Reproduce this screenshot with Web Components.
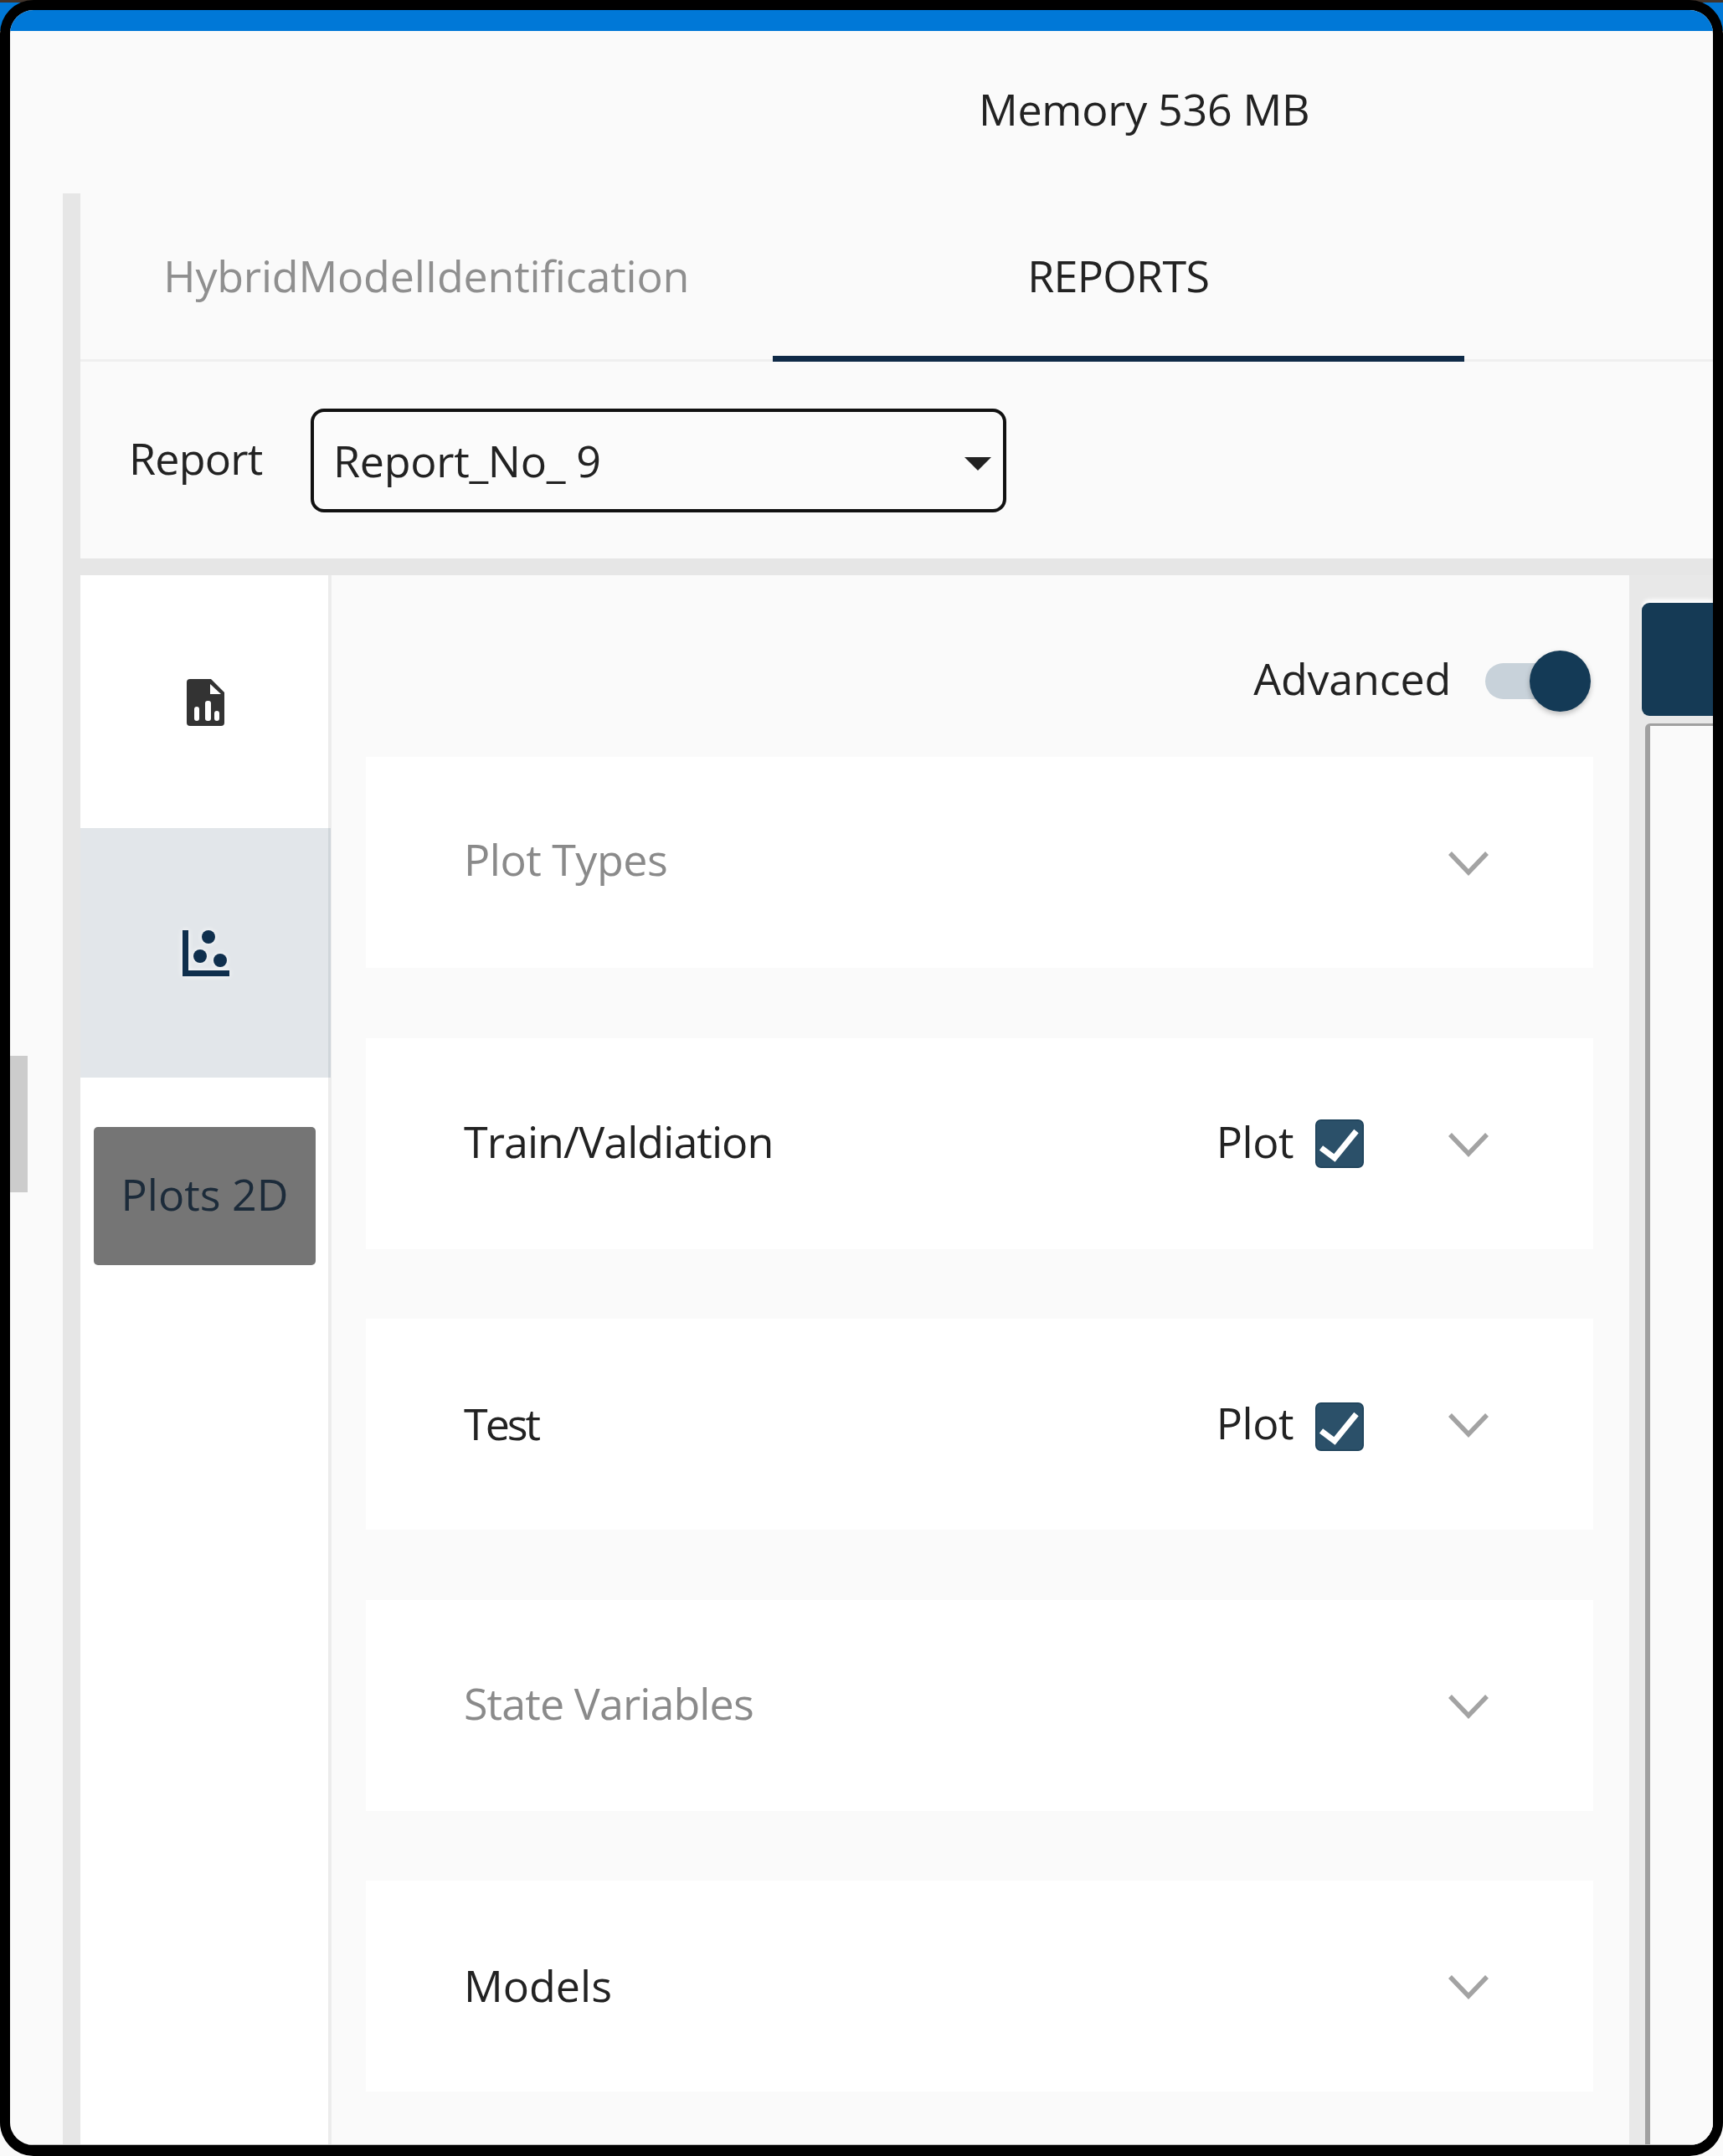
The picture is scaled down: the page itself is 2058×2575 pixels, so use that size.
<!DOCTYPE html>
<html>
<head>
<meta charset="utf-8">
<style>
  html, body { margin: 0; padding: 0; }
  body {
    font-family: "Open Sans", "Liberation Sans", sans-serif;
    background: linear-gradient(#40342c 3px, #0078d7 3px, #0078d7 37px, #fafafa 37px);
  }
</style>
</head>
<body>
<app-frame>
  <header-bar>Memory 536 MB</header-bar>
  <report-tabs first="HybridModelIdentification" second="REPORTS"></report-tabs>
  <report-bar label="Report" value="Report_No_ 9"></report-bar>
  <work-area>
    <side-rail></side-rail>
    <options-panel>
      <option-card label="Plot Types" muted style="--ls:-.5px; --dy:10px"></option-card>
      <option-card label="Train/Valdiation" plot style="--ls:-.95px; --dy:7px"></option-card>
      <option-card label="Test" plot style="--ls:-3px; --dy:3px; --boxdy:3px"></option-card>
      <option-card label="State Variables" muted style="--ls:-.9px; --dy:7px"></option-card>
      <option-card label="Models" style="--dy:3px"></option-card>
    </options-panel>
    <preview-pane></preview-pane>
  </work-area>
</app-frame>
<script>
  function def(name, html) {
    customElements.define(name, class extends HTMLElement {
      connectedCallback() {
        const root = this.attachShadow({mode: 'open'});
        root.innerHTML = typeof html === 'function' ? html(this) : html;
      }
    });
  }

  def('app-frame', `
    <style>
      :host {
        display: flex; flex-direction: column; position: relative;
        width: 2058px; height: 2575px; box-sizing: border-box;
        border: 12px solid #000; border-bottom-width: 13px; border-radius: 40px;
        background: #fafafa; overflow: hidden;
      }
      .title { flex: none; height: 25px; background: #0078d7; }
      .rest { flex: 1; min-height: 0; display: flex; flex-direction: column; }
      .handle { position: absolute; left: 0; top: 1249px; width: 21px; height: 163px; background: #cccccc; }
      .line { flex: none; height: 1px; background: #b5b5b5; }
    </style>
    <div class="title"></div>
    <div class="rest"><slot></slot></div>
    <div class="line"></div>
    <div class="handle"></div>
  `);

  def('header-bar', `
    <style>
      :host {
        display: flex; align-items: center; flex: none; box-sizing: border-box;
        height: 194px; padding: 0 0 10px 1157px;
        font-size: 52px; color: #222; letter-spacing: -.3px;
      }
    </style>
    <slot></slot>
  `);

  def('report-tabs', el => `
    <style>
      :host {
        display: flex; flex: none; box-sizing: border-box; height: 201px;
        margin-left: 63px; border-left: 21px solid #e6e6e6;
        font-size: 52px;
      }
      .wrap { flex: 1; display: flex; border-bottom: 3px solid #efefef; padding-right: 297px; }
      .tab {
        flex: 1; display: flex; align-items: center; justify-content: center;
        margin-bottom: -3px; border-bottom: 7px solid transparent;
      }
      .off { color: #8f8f8f; letter-spacing: -.2px; }
      .on { color: #222; border-bottom-color: #0f2a47; letter-spacing: -.7px; }
    </style>
    <div class="wrap">
      <div class="tab off">${el.getAttribute('first')}</div>
      <div class="tab on">${el.getAttribute('second')}</div>
    </div>
  `);

  def('report-bar', el => `
    <style>
      :host {
        display: flex; align-items: center; flex: none; box-sizing: border-box; height: 235px;
        margin-left: 63px; border-left: 21px solid #e6e6e6; padding-left: 58px;
        font-size: 52px; color: #222;
      }
      .label { width: 217px; padding-bottom: 6px; letter-spacing: -.8px; }
      .select {
        display: flex; align-items: center; justify-content: space-between; box-sizing: border-box;
        width: 831px; height: 124px; border: 4px solid #111; border-radius: 16px;
        padding: 0 14px 0 23px; background: #fbfbfb; letter-spacing: -.3px;
      }
      svg { width: 32px; height: 18px; margin-top: 8px; }
    </style>
    <div class="label">${el.getAttribute('label')}</div>
    <div class="select">
      <span>${el.getAttribute('value')}</span>
      <svg viewBox="0 0 32 18"><path d="M0 1H32L16 17Z" fill="#222"/></svg>
    </div>
  `);

  def('work-area', `
    <style>
      :host {
        display: flex; flex: 1; min-height: 0;
        margin-left: 63px; border-left: 21px solid #e6e6e6; border-top: 20px solid #e6e6e6;
      }
    </style>
    <slot></slot>
  `);

  def('side-rail', `
    <style>
      :host {
        display: flex; flex-direction: column; flex: none; box-sizing: border-box; width: 300px;
        background: #fff; border-right: 4px solid #ececec;
      }
      .item { display: flex; align-items: center; justify-content: center; flex: none; }
      .one { height: 302px; }
      .one svg { margin: 0 0 -1px 2px; }
      .two { height: 298px; background: #e2e6ea; margin-right: -3px; border-right: 3px solid #d0d6db; }
      .two svg { margin-left: 4px; }
      .btn {
        display: flex; align-items: center; justify-content: center; box-sizing: border-box;
        height: 165px; margin: 59px 15px 0 16px; padding-bottom: 6px; border-radius: 5px;
        background: #757575; color: #1c2b3a; font-size: 52px;
      }
    </style>
    <div class="item one">
      <svg width="45" height="56" viewBox="0 0 45 56">
        <path fill="#333" d="M4 0H29L45 16V52Q45 56 41 56H4Q0 56 0 52V4Q0 0 4 0Z"/>
        <path fill="#fff" d="M28 6 41 18H28Z"/>
        <rect fill="#fff" x="9" y="33" width="6" height="17" rx="3"/>
        <rect fill="#fff" x="22" y="26" width="7" height="24" rx="3"/>
        <rect fill="#fff" x="33" y="38" width="6" height="12" rx="3"/>
      </svg>
    </div>
    <div class="item two">
      <svg width="64" height="64" viewBox="0 0 64 64" style="filter: drop-shadow(0 0 3px #fff)">
        <path fill="#0f2f4d" d="M4 5h7v48h49v7H4Z"/>
        <circle fill="#0f2f4d" cx="35" cy="13" r="8"/>
        <circle fill="#0f2f4d" cx="25" cy="36" r="8"/>
        <circle fill="#0f2f4d" cx="49" cy="41" r="8"/>
      </svg>
    </div>
    <div class="btn">Plots 2D</div>
  `);

  def('options-panel', `
    <style>
      :host {
        display: flex; flex-direction: column; flex: none; box-sizing: border-box; width: 1550px;
        padding: 0 43px 0 41px; background: #fafafa; color: #222; font-size: 52px;
      }
      .top {
        display: flex; align-items: center; justify-content: flex-end; flex: none;
        height: 217px; box-sizing: border-box; padding: 36px 34px 0 0;
      }
      .top span { padding-bottom: 9px; letter-spacing: -.2px; }
      .track { position: relative; width: 95px; height: 43px; margin-left: 41px; border-radius: 22px; background: #c8d2da; }
      .thumb {
        position: absolute; left: 53px; top: -15px; width: 73px; height: 73px; border-radius: 50%;
        background: #143a56; box-shadow: 0 3px 6px rgba(0,0,0,.25);
      }
      .list { display: flex; flex-direction: column; gap: 83.5px; }
    </style>
    <div class="top"><span>Advanced</span><div class="track"><div class="thumb"></div></div></div>
    <div class="list"><slot></slot></div>
  `);

  def('option-card', el => `
    <style>
      :host {
        display: flex; align-items: center; box-sizing: border-box; height: 252px;
        padding: 0 124px 0 117px; background: #fff; font-size: 52px; color: #222;
      }
      :host([muted]) { color: #8a8a8a; }
      .label { flex: 1; padding-bottom: var(--dy, 4px); letter-spacing: var(--ls, 0); }
      .plot { display: flex; align-items: center; margin-right: 100px; }
      .plot span { margin-right: 26px; padding-bottom: 6px; letter-spacing: -.5px; }
      .box { width: 58px; height: 58px; display: block; transform: translateY(var(--boxdy, 0)); }
      .chev { width: 50px; height: 30px; display: block; margin-top: 2px; }
    </style>
    <div class="label">${el.getAttribute('label')}</div>
    ${el.hasAttribute('plot') ? `<div class="plot"><span>Plot</span>
      <svg class="box" viewBox="0 0 58 58">
        <rect x=".75" y=".75" width="56.5" height="56.5" rx="6" fill="#2b5069" stroke="#1c4059" stroke-width="1.5"/>
        <path d="M7 34 23 46 49 14" fill="none" stroke="#fff" stroke-width="7"/>
      </svg></div>` : ''}
    <svg class="chev" viewBox="0 0 50 30"><path d="M3 3 25 26 47 3" fill="none" stroke="#a3a3a3" stroke-width="5.5"/></svg>
  `);

  def('preview-pane', `
    <style>
      :host {
        display: flex; flex-direction: column; flex: 1; min-width: 0; background: #e8e8e8;
        padding-top: 33px;
      }
      .head {
        flex: none; height: 135px; margin-left: 15px; background: #153a55;
        border-radius: 9px 0 0 9px; box-shadow: 0 -5px 4px -1px #fff;
      }
      .body {
        flex: 1; margin: 9px 0 0 19px; background: #fafafa;
        border-left: 6px solid #a0a0a0; border-top: 3px solid #a0a0a0; border-top-left-radius: 6px;
      }
    </style>
    <div class="head"></div>
    <div class="body"></div>
  `);
</script>
</body>
</html>
